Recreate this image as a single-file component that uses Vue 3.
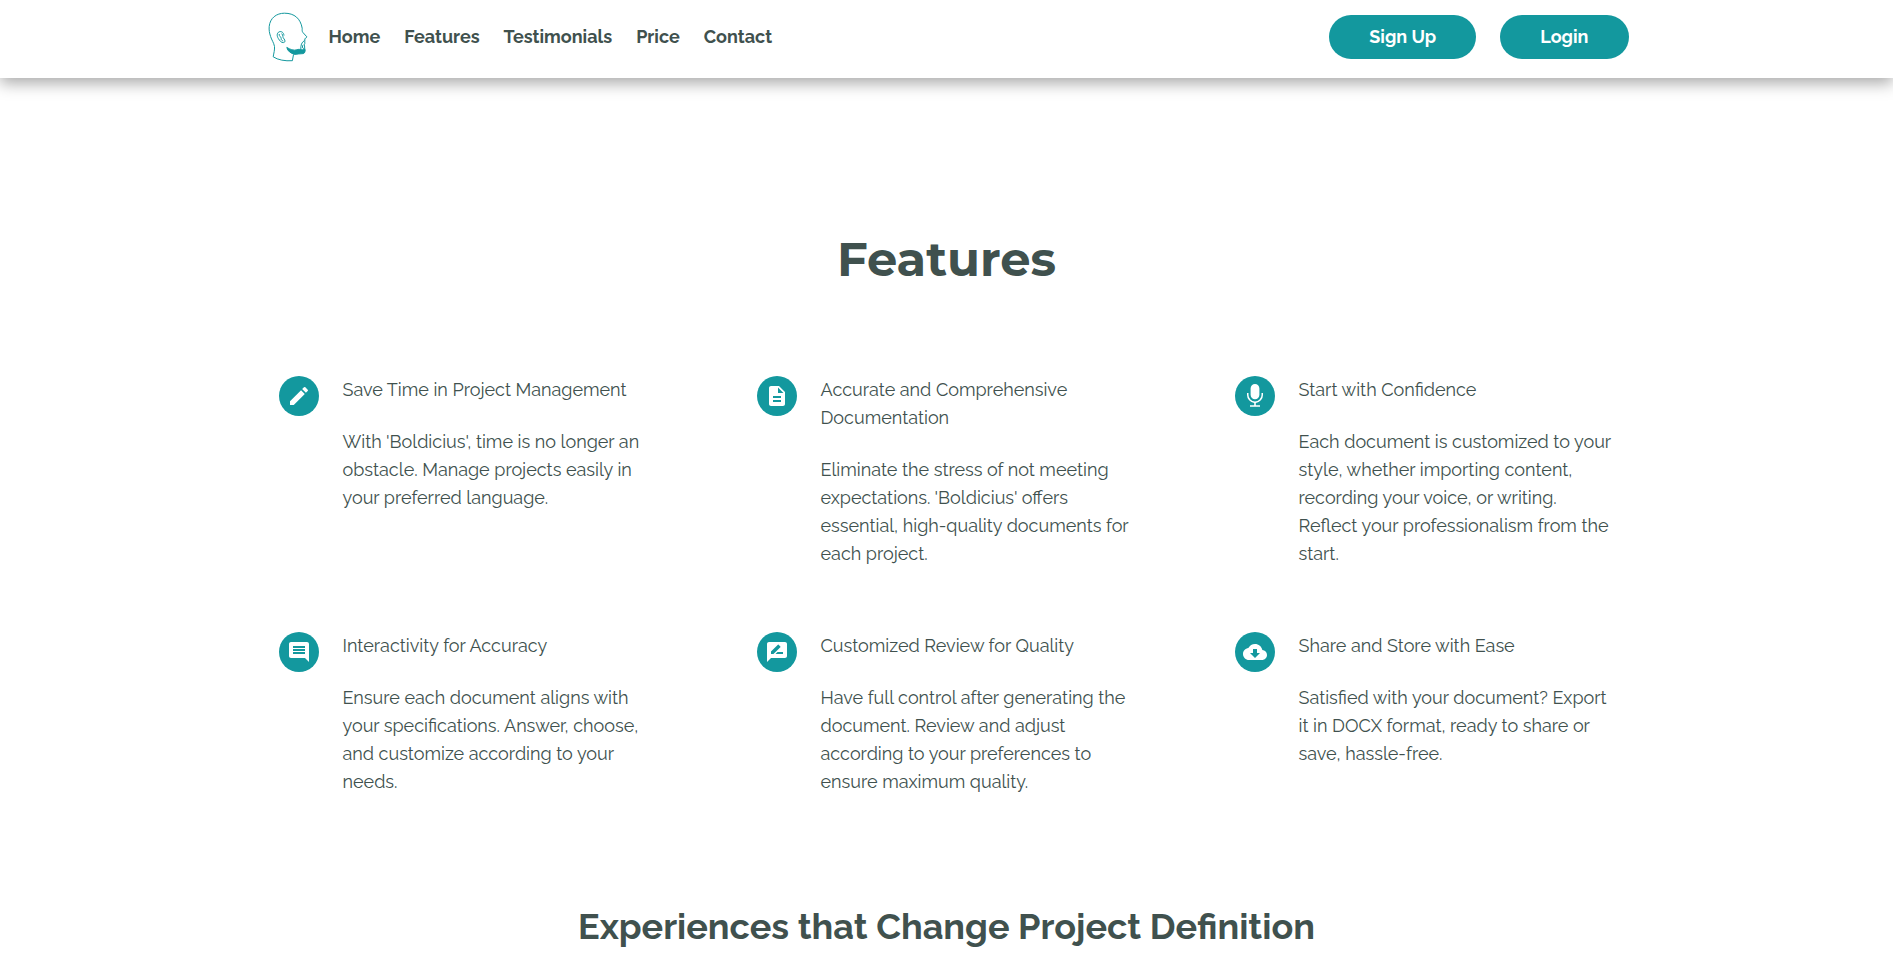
<template>
  <div class="page">
    <header class="navbar">
      <div class="navbar-inner">
        <a href="#" class="logo" aria-label="Boldicius">
          <svg viewBox="0 0 40 50" width="40" height="50" fill="none" stroke="#13989e" stroke-width="1">
            <path d="M25.5 42.5 L24.4 48.7 C17 49.2 10 48 5.2 44.8 C5.8 41 6.8 38 6.5 34.5 C5.8 30.5 3.6 28 2.6 24.5 C1.4 21 .9 18 1.2 14.5 C2 6 8.5 1.2 16.4 1.2 C26.5 1.2 32.5 6.5 34.2 16.3 C34.2 18 33.9 19.4 35 20.6 L38.8 24.8 C38.6 26 37.6 26.2 36.9 26.6 C36.5 28.5 37 30 36.8 31.5 C35.8 32.5 36.8 33.6 36.6 35 L36.9 38.5" />
            <path d="M16 23.5 C15.6 20.5 13.6 19 11.2 19.8 C8.6 21 8.8 24.2 10.4 26.6 C11.6 28.6 13.2 30.8 15.4 30.6 C17.4 30.4 17.4 28.4 16 26.9 C14.2 25.2 15.6 23.4 13.6 21.6 M11.2 22 C10.8 24.5 13 24.2 13.2 26.4 C12.8 28 14.4 28.6 15.2 29" />
            <path d="M18.8 35.4 C22 37.4 25.5 38.8 29 37.8 C31 37 31.6 37.4 33 37.8 C35 38.2 36 36.8 37 37.4 C37.4 39.6 36.6 41.2 35.2 41.6 C32 41.4 29.5 42.4 26.5 42.4 C23 41.2 19.4 39.2 18.8 35.4 Z" fill="#13989e" />
            <path d="M36.4 28.6 C33.6 30.4 32.6 33 32.8 37.8 M35.2 32.8 C34 34 34.2 36.2 35.8 36.8" />
          </svg>
        </a>
        <nav class="links">
          <a v-for="link in links" :key="link" href="#">{{ link }}</a>
        </nav>
        <div class="actions">
          <button type="button" class="btn">Sign Up</button>
          <button type="button" class="btn">Login</button>
        </div>
      </div>
    </header>

    <main>
      <section class="features">
        <h1>Features</h1>
        <div class="grid">
          <article v-for="item in features" :key="item.title" class="feature">
            <span class="icon">
              <svg viewBox="0 0 24 24" width="24" height="24" fill="#fff">
                <path :d="item.icon" />
              </svg>
            </span>
            <div class="text">
              <h3>{{ item.title }}</h3>
              <p>{{ item.text }}</p>
            </div>
          </article>
        </div>
      </section>

      <section class="testimonials">
        <h2>Experiences that Change Project Definition</h2>
      </section>
    </main>
  </div>
</template>

<script setup>
const links = ['Home', 'Features', 'Testimonials', 'Price', 'Contact']

const features = [
  {
    title: 'Save Time in Project Management',
    text: "With 'Boldicius', time is no longer an obstacle. Manage projects easily in your preferred language.",
    icon: 'M3 17.25V21h3.75L17.81 9.94l-3.75-3.75L3 17.25zM20.71 7.04a1 1 0 0 0 0-1.41l-2.34-2.34a1 1 0 0 0-1.41 0l-1.83 1.83 3.75 3.75 1.83-1.83z'
  },
  {
    title: 'Accurate and Comprehensive Documentation',
    text: "Eliminate the stress of not meeting expectations. 'Boldicius' offers essential, high-quality documents for each project.",
    icon: 'M14 2H6c-1.1 0-1.99.9-1.99 2L4 20c0 1.1.89 2 1.99 2H18c1.1 0 2-.9 2-2V8l-6-6zm2 16H8v-2h8v2zm0-4H8v-2h8v2zm-3-5V3.5L18.5 9H13z'
  },
  {
    title: 'Start with Confidence',
    text: 'Each document is customized to your style, whether importing content, recording your voice, or writing. Reflect your professionalism from the start.',
    icon: 'M12 0a4.4 4.4 0 0 1 4.4 4.4v6.4a4.4 4.4 0 0 1-8.8 0V4.4A4.4 4.4 0 0 1 12 0zM4 9h1.5v2a6.5 6.5 0 0 0 13 0V9H20v2a8 8 0 0 1-7.2 7.9v2.3H17v1.5H7v-1.5h4.2v-2.3A8 8 0 0 1 4 11z'
  },
  {
    title: 'Interactivity for Accuracy',
    text: 'Ensure each document aligns with your specifications. Answer, choose, and customize according to your needs.',
    icon: 'M21.99 4c0-1.1-.89-2-1.99-2H4c-1.1 0-2 .9-2 2v12c0 1.1.9 2 2 2h14l4 4-.01-18zM18 14H6v-2h12v2zm0-3H6V9h12v2zm0-3H6V6h12v2z'
  },
  {
    title: 'Customized Review for Quality',
    text: 'Have full control after generating the document. Review and adjust according to your preferences to ensure maximum quality.',
    icon: 'M20 2H4c-1.1 0-1.99.9-1.99 2L2 22l4-4h14c1.1 0 2-.9 2-2V4c0-1.1-.9-2-2-2zM6 14v-2.47l6.88-6.88c.2-.2.51-.2.71 0l1.77 1.77c.2.2.2.51 0 .71L8.47 14H6zm12 0h-7.5l2-2H18v2z'
  },
  {
    title: 'Share and Store with Ease',
    text: 'Satisfied with your document? Export it in DOCX format, ready to share or save, hassle-free.',
    icon: 'M19.35 10.04C18.67 6.59 15.64 4 12 4 9.11 4 6.6 5.64 5.35 8.04 2.34 8.36 0 10.91 0 14c0 3.31 2.69 6 6 6h13c2.76 0 5-2.24 5-5 0-2.64-2.05-4.78-4.65-4.96zM17 13l-5 5-5-5h3V9h4v4h3z'
  }
]
</script>

<style>
body {
  margin: 0;
  background: #fff;
}
</style>

<style scoped>
.page {
  height: 100vh;
  overflow: hidden;
  font-family: Raleway, Lato, sans-serif;
  font-size: 18px;
  line-height: 28px;
  color: #40514e;
}

/* barra superior */
.navbar {
  box-shadow: 0 5px 15px rgba(0, 0, 0, .35);
}
.navbar-inner {
  display: flex;
  align-items: center;
  max-width: 1364px;
  height: 74px;
  margin: 0 auto;
  padding-bottom: 4px;
}
.logo {
  display: flex;
  margin: 0 21px 0 3px;
}
.links {
  display: flex;
  gap: 24px;
}
.links a {
  color: inherit;
  font-weight: 700;
  text-decoration: none;
}
.actions {
  display: flex;
  gap: 24px;
  margin-left: auto;
}
.btn {
  height: 44px;
  padding: 0 40px 2px;
  border: 0;
  border-radius: 22px;
  background: #13989e;
  color: #fff;
  font-family: inherit;
  font-size: 18px;
  font-weight: 700;
  cursor: pointer;
}

/* funcionalidades */
.features {
  max-width: 1336px;
  margin: 0 auto;
  padding-top: 151px;
}
h1 {
  margin: 0 0 87px;
  font-family: Montserrat, Inter, sans-serif;
  font-size: 48px;
  font-weight: 700;
  line-height: 60px;
  text-align: center;
}
.grid {
  display: grid;
  grid-template-columns: repeat(3, 1fr);
  gap: 64px 98px;
}
.feature {
  display: flex;
  align-items: flex-start;
  gap: 24px;
}
.icon {
  display: flex;
  flex: none;
  align-items: center;
  justify-content: center;
  width: 40px;
  height: 40px;
  border-radius: 50%;
  background: #13989e;
}
.text h3 {
  margin: 0 0 24px;
  font-size: 18px;
  font-weight: 400;
}
.text p {
  margin: 0;
}

.testimonials h2 {
  margin: 108px 0 0;
  font-size: 36px;
  font-weight: 700;
  line-height: 44px;
  text-align: center;
}
</style>
